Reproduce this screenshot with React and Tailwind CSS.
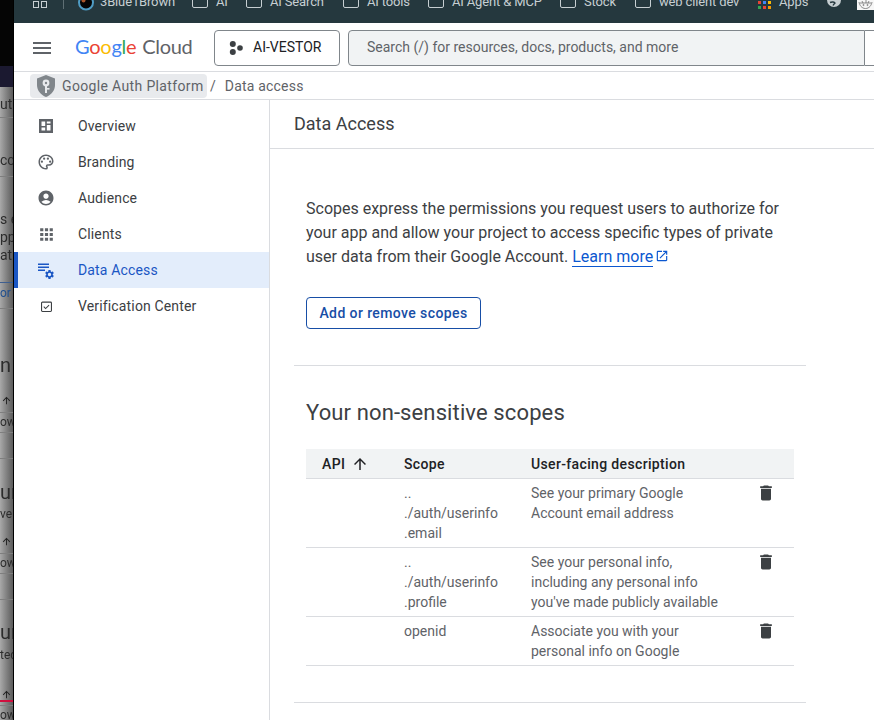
import React from "react";
import {
  MdMenu,
  MdOutlinePalette,
  MdAccountCircle,
  MdApps,
  MdDelete,
  MdOpenInNew,
  MdArrowUpward,
  MdSettings,
} from "react-icons/md";

function OverviewIcon() {
  return (
    <svg viewBox="0 0 14 14" className="w-[14px] h-[14px]" fill="#5f6368">
      <path fillRule="evenodd" d="M0 0h14v14H0zM2.500 2.500v4.500h3.700V2.500zM7.800 2.500v2h3.700v-2zM2.500 8.500v3h3.700v-3zM7.800 6v5.500h3.700V6z" />
    </svg>
  );
}

function DataAccessIcon() {
  return (
    <div className="relative w-[16px] h-[14px]">
      <svg viewBox="0 0 16 14" className="w-[16px] h-[14px]" fill="#1a56c4">
        <rect x="0" y="0.500" width="11" height="1.500" />
        <rect x="0" y="3.500" width="11" height="1.500" />
        <rect x="0" y="6.500" width="7" height="1.500" />
      </svg>
      <MdSettings className="absolute right-[-1px] bottom-[-3px] w-[11px] h-[11px] text-[#1a56c4]" />
    </div>
  );
}

function VerifyIcon() {
  return (
    <svg viewBox="0 0 12 12" className="w-[11px] h-[11px]" fill="none" stroke="#3c4043">
      <rect x="0.600" y="1.200" width="10.800" height="10.200" rx="1" strokeWidth="1.200" />
      <path d="M3 6.200l2 2 3.800-3.800" strokeWidth="1.100" />
    </svg>
  );
}

function ShieldIcon() {
  return (
    <svg viewBox="0 0 18 22" className="w-[18px] h-[22px]">
      <path d="M9 0l9 3.500v6.500c0 5.500-3.800 10-9 12-5.200-2-9-6.500-9-12V3.500z" fill="#80868b" />
      <circle cx="9" cy="8" r="3.400" fill="#e8eaed" />
      <rect x="8" y="9" width="2" height="9" fill="#e8eaed" />
      <rect x="10" y="13" width="2.500" height="1.600" fill="#e8eaed" />
      <circle cx="9" cy="8" r="1.200" fill="#80868b" />
    </svg>
  );
}

function ProjectDots() {
  return (
    <svg viewBox="0 0 14 14" className="w-[14px] h-[14px]" fill="#3c4043">
      <circle cx="3.800" cy="3" r="3" />
      <circle cx="3.800" cy="11" r="3" />
      <circle cx="11" cy="7" r="2.800" />
    </svg>
  );
}

function BookmarkBox() {
  return <div className="w-[16px] h-[16px] -mt-[3px] border-[1.5px] border-[#c7cfd2] rounded-[2px] shrink-0" />;
}

function Bookmark({ label, className }) {
  return (
    <div className={`flex items-center gap-[8px] shrink-0 ${className}`}>
      <BookmarkBox />
      <span>{label}</span>
    </div>
  );
}

function AppsDots() {
  return (
    <svg viewBox="0 0 13 13" className="w-[13px] h-[13px] mt-[2px] shrink-0">
      <rect x="0" y="0" width="3" height="3" fill="#34a853" />
      <rect x="5" y="0" width="3" height="3" fill="#4285f4" />
      <rect x="10" y="0" width="3" height="3" fill="#fbbc04" />
      <rect x="0" y="5" width="3" height="3" fill="#ea4335" />
      <rect x="5" y="5" width="3" height="3" fill="#4285f4" />
      <rect x="10" y="5" width="3" height="3" fill="#fbbc04" />
      <rect x="0" y="10" width="3" height="3" fill="#34a853" />
      <rect x="5" y="10" width="3" height="3" fill="#ea4335" />
      <rect x="10" y="10" width="3" height="3" fill="#f29900" />
    </svg>
  );
}

function ChannelLogo() {
  return (
    <svg viewBox="0 0 16 20" className="w-[16px] h-[20px] ml-[14px] shrink-0">
      <circle cx="8" cy="10.500" r="7" fill="#050505" stroke="#4f9cc4" strokeWidth="2" />
      <circle cx="5.500" cy="8.500" r="2" fill="#a8552a" />
    </svg>
  );
}

function Globe() {
  return (
    <svg viewBox="0 0 16 16" className="w-[16px] h-[16px] -mt-[3px] shrink-0">
      <circle cx="8" cy="8" r="7" fill="#c7cfd2" />
      <path d="M4 10.500c2-1 4.500-.5 5 .5-.8.8-1.500 1.500-2 2.500M11 5c1 1.200 2 2 3.500 2" fill="none" stroke="#25383e" strokeWidth="1.400" />
    </svg>
  );
}

function Avatar() {
  return (
    <div className="ml-[15px] w-[17px] h-[20px] -mt-[3px] bg-[#f7f7f7] shrink-0 flex items-end">
      <svg viewBox="0 0 17 10" className="w-[17px] h-[10px]" fill="none" stroke="#6f6f6f" strokeWidth="0.800">
        <path d="M2 2c.5 3 2.500 6.500 6.500 6.500S14.500 5 15 2" />
        <path d="M3 3h11M5 1l1 2M9 0v3M12 1l-1 2" />
        <circle cx="6.500" cy="5" r="0.600" />
        <circle cx="10.500" cy="5" r="0.600" />
      </svg>
    </div>
  );
}

function TopBar() {
  return (
    <div className="h-[23px] shrink-0 bg-[#25383e] overflow-hidden flex items-center pb-[20px] pl-[19px] text-[13px] tracking-[-0.15px] text-[#c7cfd2] whitespace-nowrap">
      <div className="w-[14px] h-[16px] -mt-[3px] grid grid-cols-2 gap-[2px] shrink-0">
        <div className="border-[1.5px] border-[#c7cfd2]" />
        <div className="border-[1.5px] border-[#c7cfd2]" />
        <div className="border-[1.5px] border-[#c7cfd2]" />
        <div className="border-[1.5px] border-[#c7cfd2]" />
      </div>
      <div className="w-px h-[14px] bg-[#5f6f74] ml-[16px] shrink-0" />
      <ChannelLogo />
      <span className="ml-[6px] w-[92px] shrink-0">3Blue1Brown</span>
      <Bookmark label="AI" className="w-[54px]" />
      <Bookmark label="AI Search" className="w-[97px]" />
      <Bookmark label="AI tools" className="w-[85px]" />
      <Bookmark label="AI Agent & MCP" className="w-[132px]" />
      <Bookmark label="Stock" className="w-[75px]" />
      <Bookmark label="web client dev" className="w-[123px]" />
      <AppsDots />
      <span className="ml-[8px] w-[47px] shrink-0">Apps</span>
      <Globe />
      <Avatar />
    </div>
  );
}

function BackWindow() {
  return (
    <div className="w-[14px] h-[720px] shrink-0 border-r border-black overflow-hidden flex flex-col bg-gradient-to-r from-[#a9a9a9] to-[#5c5c5c] text-[#2c2c2c] text-[14px] leading-[18px] whitespace-nowrap blur-[0.3px]">
      <div className="h-[66px] shrink-0 bg-[#050505]" />
      <div className="h-[21px] shrink-0 bg-[#1b1930]" />
      <div className="h-[30px] shrink-0 pt-[8px]">uth</div>
      <div className="h-[59px] shrink-0 border-t border-[#7f7f7f] pt-[33px]">cc</div>
      <div className="h-[106px] shrink-0 border-t border-[#7f7f7f] pt-[33px]">
        <div>s e</div>
        <div>pp</div>
        <div>ata</div>
      </div>
      <div className="h-[26px] shrink-0 border-t border-[#3f5f8f] text-[#1f4f8f] text-[12px] pt-[1px]">or r</div>
      <div className="h-[104px] shrink-0 border-t border-[#7f7f7f] pt-[44px]">
        <div className="text-[20px] leading-[24px]">n</div>
        <MdArrowUpward className="mt-[18px] ml-[1px] w-[11px] h-[11px] text-[#1f1f1f]" />
      </div>
      <div className="h-[20px] shrink-0 border-t border-[#7f7f7f] text-[12px]">ows</div>
      <div className="h-[26px] shrink-0 border-t border-[#7f7f7f]" />
      <div className="h-[95px] shrink-0 border-t border-[#7f7f7f] pt-[21px]">
        <div className="text-[20px] leading-[24px]">ur</div>
        <div className="text-[12px] mt-[1px]">ve s</div>
        <MdArrowUpward className="mt-[13px] ml-[1px] w-[11px] h-[11px] text-[#1f1f1f]" />
      </div>
      <div className="h-[20px] shrink-0 border-t border-[#7f7f7f] text-[12px]">ows</div>
      <div className="h-[26px] shrink-0 border-t border-[#7f7f7f]" />
      <div className="h-[101px] shrink-0 border-t border-[#7f7f7f] pt-[20px]">
        <div className="text-[20px] leading-[24px]">ur</div>
        <div className="text-[12px] mt-[2px]">ted</div>
        <MdArrowUpward className="mt-[25px] ml-[1px] w-[11px] h-[11px] text-[#1f1f1f]" />
      </div>
      <div className="h-[2px] shrink-0 bg-[#d0103f]" />
      <div className="h-[3px] shrink-0" />
      <div className="h-[15px] shrink-0 border-t border-[#7f7f7f] text-[12px]">ows</div>
    </div>
  );
}

function Header() {
  return (
    <div className="h-[49px] shrink-0 border-b border-[#dadce0] flex items-center pt-[1px]">
      <MdMenu className="w-[24px] h-[24px] ml-[16px] text-[#5f6368]" />
      <div className="ml-[21px] -mt-[4px] w-[139px] shrink-0 flex items-baseline text-[20px] tracking-[-0.3px] font-['Lato',sans-serif] whitespace-nowrap">
        <span className="text-[#4285f4]">G</span>
        <span className="text-[#ea4335]">o</span>
        <span className="text-[#fbbc04]">o</span>
        <span className="text-[#4285f4]">g</span>
        <span className="text-[#34a853]">l</span>
        <span className="text-[#ea4335]">e</span>
        <span className="text-[#5f6368] ml-[6px]">Cloud</span>
      </div>
      <div className="w-[126px] h-[36px] shrink-0 rounded-[4px] border border-[#80868b] flex items-center pl-[14px] text-[14px] text-[#202124]">
        <ProjectDots />
        <span className="ml-[10px]">AI-VESTOR</span>
      </div>
      <div className="ml-[8px] w-[517px] h-[36px] shrink-0 rounded-l-[4px] border border-[#80868b] bg-[#f1f3f4] flex items-center pl-[18px] text-[14px] text-[#5f6368] whitespace-nowrap">
        Search (/) for resources, docs, products, and more
      </div>
      <div className="flex-1 h-[36px] border-y border-[#80868b]" />
    </div>
  );
}

function Breadcrumb() {
  return (
    <div className="h-[28px] shrink-0 border-b border-[#dadce0] flex items-center pl-[16px] pt-[1px] text-[14px] text-[#5f6368] whitespace-nowrap">
      <div className="w-[177px] h-[24px] rounded-[4px] bg-[#e8eaed] flex items-center pl-[7px] gap-[7px] tracking-[0.35px]">
        <ShieldIcon />
        <span>Google Auth Platform</span>
      </div>
      <span className="ml-[3px]">/</span>
      <span className="ml-[9px] tracking-[0.2px]">Data access</span>
    </div>
  );
}

const navItems = [
  { label: "Overview", icon: <OverviewIcon /> },
  { label: "Branding", icon: <MdOutlinePalette className="w-[18px] h-[18px] text-[#5f6368]" /> },
  { label: "Audience", icon: <MdAccountCircle className="w-[18px] h-[18px] text-[#5f6368]" /> },
  { label: "Clients", icon: <MdApps className="w-[19px] h-[19px] text-[#5f6368]" /> },
  { label: "Data Access", icon: <DataAccessIcon />, active: true },
  { label: "Verification Center", icon: <VerifyIcon /> },
];

function Sidebar() {
  return (
    <div className="w-[256px] shrink-0 border-r border-[#dadce0] pt-[8px] text-[14px] tracking-[0.15px]">
      {navItems.map((item) => (
        <div
          key={item.label}
          className={
            item.active
              ? "h-[36px] flex items-center border-l-[4px] border-[#1a56c4] bg-[#e3edfb] text-[#1a56c4]"
              : "h-[36px] flex items-center border-l-[4px] border-transparent text-[#3c4043]"
          }
        >
          <div className="w-[60px] shrink-0 flex justify-center pl-[12px] pr-[16px]">{item.icon}</div>
          <span>{item.label}</span>
        </div>
      ))}
    </div>
  );
}

const scopes = [
  {
    scope: <>..<br />./auth/userinfo<br />.email</>,
    text: <>See your primary Google<br />Account email address</>,
  },
  {
    scope: <>..<br />./auth/userinfo<br />.profile</>,
    text: <>See your personal info,<br />including any personal info<br />you've made publicly available</>,
  },
  {
    scope: "openid",
    text: <>Associate you with your<br />personal info on Google</>,
  },
];

function ScopesTable() {
  return (
    <table className="w-[488px] table-fixed border-collapse text-[14px] leading-[20px] text-[#5f6368] ml-[12px] mt-[21px]">
      <thead>
        <tr className="h-[29px] bg-[#f1f3f4] border-b border-[#dadce0] text-[#202124] text-left tracking-[0.35px]">
          <th className="w-[82px] pl-[16px] pt-[1px] font-medium">
            <div className="flex items-center gap-[6px]">
              API
              <MdArrowUpward className="w-[18px] h-[18px]" />
            </div>
          </th>
          <th className="w-[127px] pl-[16px] pt-[1px] font-medium">Scope</th>
          <th className="w-[228px] pl-[16px] pt-[1px] font-medium">User-facing description</th>
          <th />
        </tr>
      </thead>
      <tbody>
        {scopes.map((row, i) => (
          <tr key={i} className="border-b border-[#dadce0] align-top">
            <td />
            <td className="pl-[16px] py-[4px]">{row.scope}</td>
            <td className="pl-[16px] py-[4px] whitespace-nowrap">{row.text}</td>
            <td className="pt-[4px] pl-[13px]">
              <MdDelete className="w-[20px] h-[20px] text-[#3c4043]" />
            </td>
          </tr>
        ))}
      </tbody>
    </table>
  );
}

function Content() {
  return (
    <div className="flex-1 min-w-0">
      <div className="h-[49px] border-b border-[#dadce0] flex items-center pl-[24px] pb-[2px] text-[18px] text-[#3c4043]">
        Data Access
      </div>
      <div className="pl-[24px] w-[560px]">
        <div className="w-[512px] border-b border-[#dadce0]">
          <p className="pl-[12px] pt-[48px] text-[16px] leading-[24px] text-[#3c4043] whitespace-nowrap">
            Scopes express the permissions you request users to authorize for
            <br />
            your app and allow your project to access specific types of private
            <br />
            user data from their Google Account.{" "}
            <span className="text-[#0b57d0] border-b border-[#0b57d0]">Learn more</span>
            <MdOpenInNew className="inline w-[14px] h-[14px] text-[#0b57d0] ml-[2px] align-[-1px]" />
          </p>
          <div className="ml-[12px] mt-[28px] mb-[36px] w-[175px] h-[32px] rounded-[4px] border border-[#174ea6] flex items-center justify-center text-[14px] font-medium tracking-[0.4px] text-[#174ea6]">
            Add or remove scopes
          </div>
        </div>
        <h2 className="pl-[12px] mt-[32px] text-[22px] leading-[30px] tracking-[0.12px] font-normal text-[#3c4043]">
          Your non-sensitive scopes
        </h2>
        <ScopesTable />
        <div className="w-[512px] border-b border-[#dadce0] mt-[36px]" />
      </div>
    </div>
  );
}

export default function App() {
  return (
    <div className="w-[874px] h-[720px] overflow-hidden flex bg-white font-['Roboto',sans-serif]">
      <BackWindow />
      <div className="flex-1 min-w-0 flex flex-col">
        <TopBar />
        <Header />
        <Breadcrumb />
        <div className="flex-1 min-h-0 flex">
          <Sidebar />
          <Content />
        </div>
      </div>
    </div>
  );
}
